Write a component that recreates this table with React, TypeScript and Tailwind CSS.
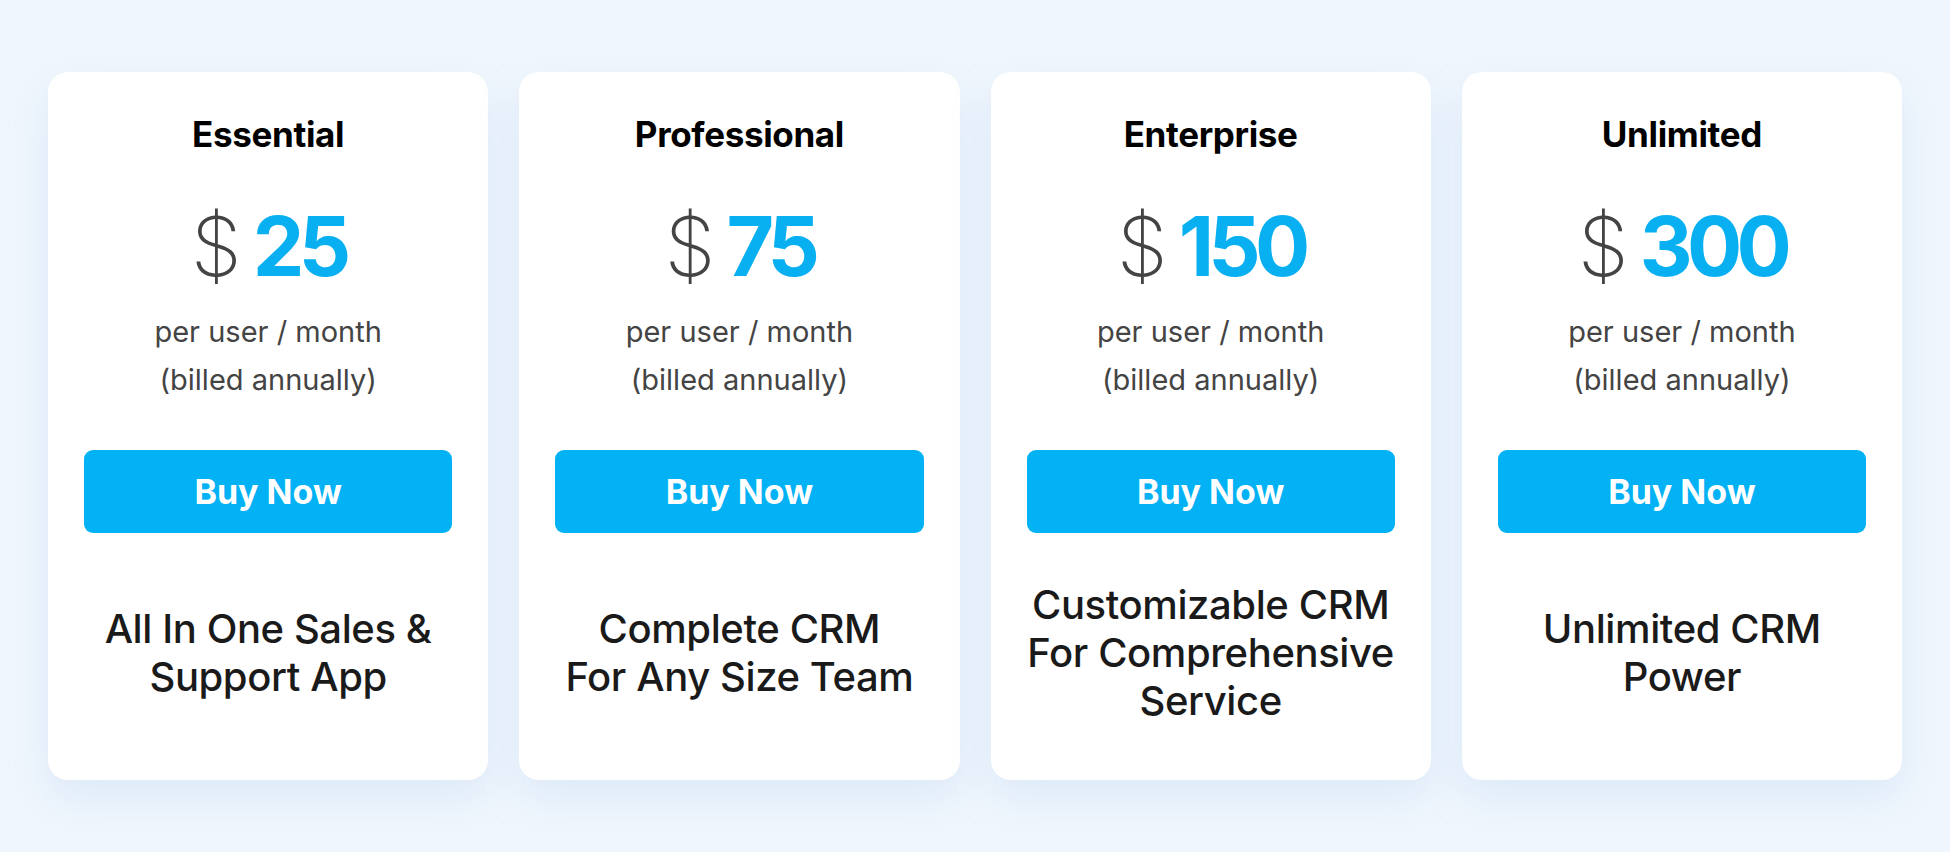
import React from 'react';

interface Plan {
    name: string;
    price: number;
    tagline: string[];
}

const plans: Plan[] = [
    { name: 'Essential', price: 25, tagline: ['All In One Sales &', 'Support App'] },
    { name: 'Professional', price: 75, tagline: ['Complete CRM', 'For Any Size Team'] },
    { name: 'Enterprise', price: 150, tagline: ['Customizable CRM', 'For Comprehensive', 'Service'] },
    { name: 'Unlimited', price: 300, tagline: ['Unlimited CRM', 'Power'] },
];

const PlanCard: React.FC<{ plan: Plan }> = ({ plan }) => {
    return (
        <div className="flex flex-col items-center bg-white rounded-[20px] shadow-[0_18px_40px_rgba(150,190,230,0.22)] h-[708px] pt-[44px] px-[36px] pb-[8px]">
            <h3 className="text-[35px] leading-[36px] font-bold text-black tracking-[-0.01em]">{plan.name}</h3>
            <div className="flex items-center mt-[50px] h-[90px]">
                <span className="text-[82px] leading-[90px] font-extralight text-[#444]">$</span>
                <span className="ml-[11px] text-[82px] leading-[90px] font-bold text-[#08b0f2] tracking-[-0.07em]">{plan.price}</span>
            </div>
            <p className="mt-[16px] text-[29px] leading-[48px] text-[#444]">per user / month</p>
            <p className="text-[29px] leading-[48px] text-[#444]">(billed annually)</p>
            <button className="mt-[46px] w-full h-[83px] rounded-[9px] bg-[#03b1f5] text-white text-[34px] font-bold">
                Buy Now
            </button>
            <div className="flex-1 flex flex-col items-center justify-center w-full">
                {plan.tagline.map((line) => (
                    <p key={line} className="whitespace-nowrap text-[40px] leading-[48px] font-medium text-[#1a1a1a] text-center tracking-[-0.01em]">
                        {line}
                    </p>
                ))}
            </div>
        </div>
    );
};

export default function App() {
    return (
        <div className="min-h-screen bg-[#f0f6fd] px-[48px] pt-[72px]" style={{ fontFamily: 'Inter, "Liberation Sans", sans-serif' }}>
            <div className="grid grid-cols-4 gap-[31px]">
                {plans.map((plan) => (
                    <PlanCard key={plan.name} plan={plan} />
                ))}
            </div>
        </div>
    );
}
